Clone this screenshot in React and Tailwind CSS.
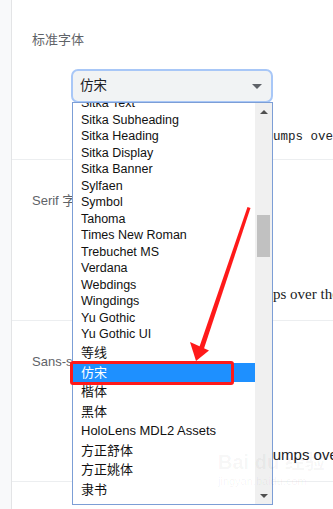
import React from "react";

const latin = [
  "Sitka Text",
  "Sitka Subheading",
  "Sitka Heading",
  "Sitka Display",
  "Sitka Banner",
  "Sylfaen",
  "Symbol",
  "Tahoma",
  "Times New Roman",
  "Trebuchet MS",
  "Verdana",
  "Webdings",
  "Wingdings",
  "Yu Gothic",
  "Yu Gothic UI",
];

const tail = ["楷体", "黑体", "HoloLens MDL2 Assets", "方正舒体", "方正姚体", "隶书"];

const listFont = {
  fontFamily: '"Liberation Sans", "Noto Sans CJK SC", sans-serif',
};

export default function App() {
  return (
    <div
      className="relative flex w-[333px] h-[509px] overflow-hidden bg-white"
      style={{ fontFamily: '"Liberation Sans", "Noto Sans CJK SC", sans-serif' }}
    >
      <div className="w-[12px] shrink-0 bg-[#f8f9fa] border-r border-[#e3e4e6]" />
      <div className="flex-1 flex flex-col overflow-hidden">
        {/* section 1 */}
        <div className="h-[160px] shrink-0 border-b border-[#eceef0] flex flex-col">
          <div className="mt-[31px] ml-[20px] leading-[18px] text-[13px] text-[#5f6368]">标准字体</div>
          <div className="mt-[20px] ml-[59px] w-[202px] h-[34px] rounded-[7px] border-2 border-[#a8c7f7] bg-[#f1f3f4] flex items-center justify-between pl-[7px] pr-[9px]">
            <span className="text-[13.5px] text-[#202124]">仿宋</span>
            <svg width="10" height="5" viewBox="0 0 10 5">
              <path d="M0 0 L10 0 L5 5 Z" fill="#5f6368" />
            </svg>
          </div>
          <div
            className="mt-[26px] ml-[103.5px] whitespace-nowrap leading-[16px] text-[12.5px] text-[#202124]"
            style={{ fontFamily: '"Liberation Mono", monospace' }}
          >
            The quick brown fox jumps over the lazy dog
          </div>
        </div>
        {/* section 2 */}
        <div className="h-[161px] shrink-0 border-b border-[#eceef0] flex flex-col">
          <div className="mt-[32px] ml-[20px] leading-[18px] text-[13px] text-[#5f6368]">Serif 字体</div>
          <div
            className="mt-[75px] ml-[107.7px] whitespace-nowrap leading-[18px] text-[15px] text-[#202124]"
            style={{ fontFamily: '"Liberation Serif", serif' }}
          >
            The quick brown fox jumps over the lazy dog
          </div>
        </div>
        {/* section 3 */}
        <div className="h-[161px] shrink-0 border-b border-[#eceef0] flex flex-col">
          <div className="mt-[32px] ml-[20px] leading-[18px] text-[13px] text-[#5f6368]">Sans-serif 字体</div>
          <div className="mt-[75px] ml-[119px] whitespace-nowrap leading-[18px] text-[15px] text-[#202124]">
            The quick brown fox jumps over the lazy dog
          </div>
        </div>
        <div className="flex-1" />
      </div>

      {/* dropdown list popup */}
      <div
        className="absolute left-[72px] top-[102px] w-[201px] h-[403px] border border-[#7c9ed6] bg-white flex overflow-hidden"
        style={listFont}
      >
        <div className="flex-1 overflow-hidden">
          <div className="mt-[-7.75px] flex flex-col text-[12.5px] text-[#111]">
            {latin.map((t) => (
              <div key={t} className="h-[16.5px] shrink-0 flex items-center pl-[8px] whitespace-nowrap">
                {t}
              </div>
            ))}
            <div className="h-[20px] shrink-0 flex items-center pl-[8px] text-[13px]">等线</div>
            <div className="h-[19.5px] shrink-0 flex items-center pl-[8px] bg-[#1e90ff] text-white text-[13px]">仿宋</div>
            {tail.map((t) => (
              <div key={t} className="h-[19.5px] shrink-0 flex items-center pl-[8px] whitespace-nowrap text-[13px]">
                {t}
              </div>
            ))}
          </div>
        </div>
        <div className="w-[17px] shrink-0 bg-[#f0f0f0] flex flex-col items-center">
          <div className="h-[17px] w-full flex items-center justify-center">
            <svg width="8" height="4" viewBox="0 0 8 4">
              <path d="M0 4 L8 4 L4 0 Z" fill="#505050" />
            </svg>
          </div>
          <div className="mt-[95px] h-[42px] w-[13px] bg-[#c1c1c1]" />
          <div className="flex-1" />
          <div className="h-[17px] w-full flex items-center justify-center">
            <svg width="8" height="4" viewBox="0 0 8 4">
              <path d="M0 0 L8 0 L4 4 Z" fill="#505050" />
            </svg>
          </div>
        </div>
      </div>

      {/* red highlight box */}
      <div className="absolute left-[70px] top-[361px] w-[164px] h-[24px] border-[3px] border-[#ff1a1a] rounded-[3px]" />

      {/* red arrow */}
      <svg className="absolute left-0 top-0" width="333" height="509" viewBox="0 0 333 509">
        <polygon points="247.5,207 250.5,208 203.5,350 199,348" fill="#ff1a1a" />
        <polygon points="190,342 209,350.5 196,361" fill="#ff1a1a" />
      </svg>

      {/* faint watermark */}
      <div className="absolute left-[218px] top-[450px] flex flex-col items-start pointer-events-none text-[rgba(0,0,0,0.045)]">
        <div className="text-[20px] font-bold leading-[24px]">Bai du 经验</div>
        <div className="text-[11px] leading-[14px]">jingyan.baidu.com</div>
      </div>
    </div>
  );
}
